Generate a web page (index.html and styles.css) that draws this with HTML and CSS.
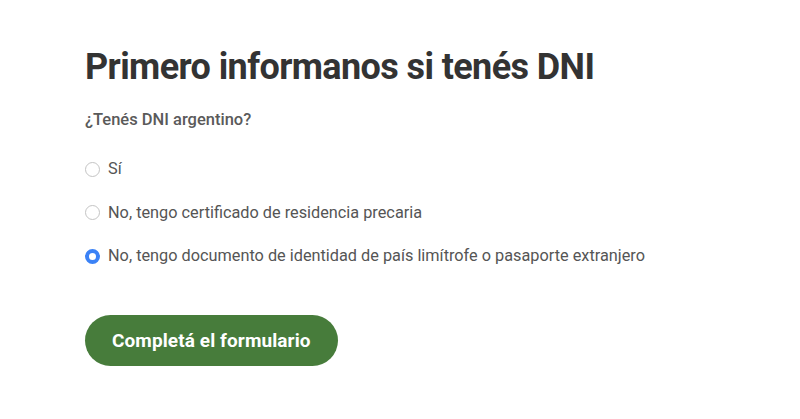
FILE: index.html
```html
<!DOCTYPE html>
<html lang="es">
<head>
<meta charset="utf-8">
<link rel="stylesheet" href="styles.css">
</head>
<body>
<main class="page">
  <h1 class="title">Primero informanos si tenés DNI</h1>
  <p class="question">¿Tenés DNI argentino?</p>
  <div class="options">
    <label class="option"><input type="radio" name="dni" class="radio"><span>Sí</span></label>
    <label class="option"><input type="radio" name="dni" class="radio"><span>No, tengo certificado de residencia precaria</span></label>
    <label class="option"><input type="radio" name="dni" class="radio" checked><span>No, tengo documento de identidad de país limítrofe o pasaporte extranjero</span></label>
  </div>
  <button class="btn">Completá el formulario</button>
</main>
</body>
</html>
```
FILE: styles.css
```css
* { box-sizing: border-box; }
html, body { margin: 0; padding: 0; background: #fff; }
body { font-family: Roboto, "Liberation Sans", sans-serif; }
.page { padding: 43px 85px 0; display: flex; flex-direction: column; align-items: flex-start; }
.title { margin: 0; font-size: 36px; font-weight: 700; color: #333; letter-spacing: -0.6px; line-height: 48px; }
.question { margin: 17px 0 0; font-size: 16.5px; color: #5a5a5a; font-weight: 500; line-height: 24px; }
.options { margin-top: 25px; display: flex; flex-direction: column; gap: 19.5px; }
.option { display: flex; align-items: center; font-size: 16.3px; color: #555; line-height: 24px; }
.radio { appearance: none; -webkit-appearance: none; margin: 0 8px 0 0; width: 15px; height: 15px; border: 1px solid #c4c4c4; border-radius: 50%; background: #fff; }
.radio:checked { border: 4px solid #3b82f6; background: #fff; }
.btn { margin-top: 47px; height: 51px; padding: 0 27px; border: none; border-radius: 26px; background: #477c3b; color: #fff; font-family: inherit; font-size: 19px; font-weight: 700; letter-spacing: 0.1px; }
```
